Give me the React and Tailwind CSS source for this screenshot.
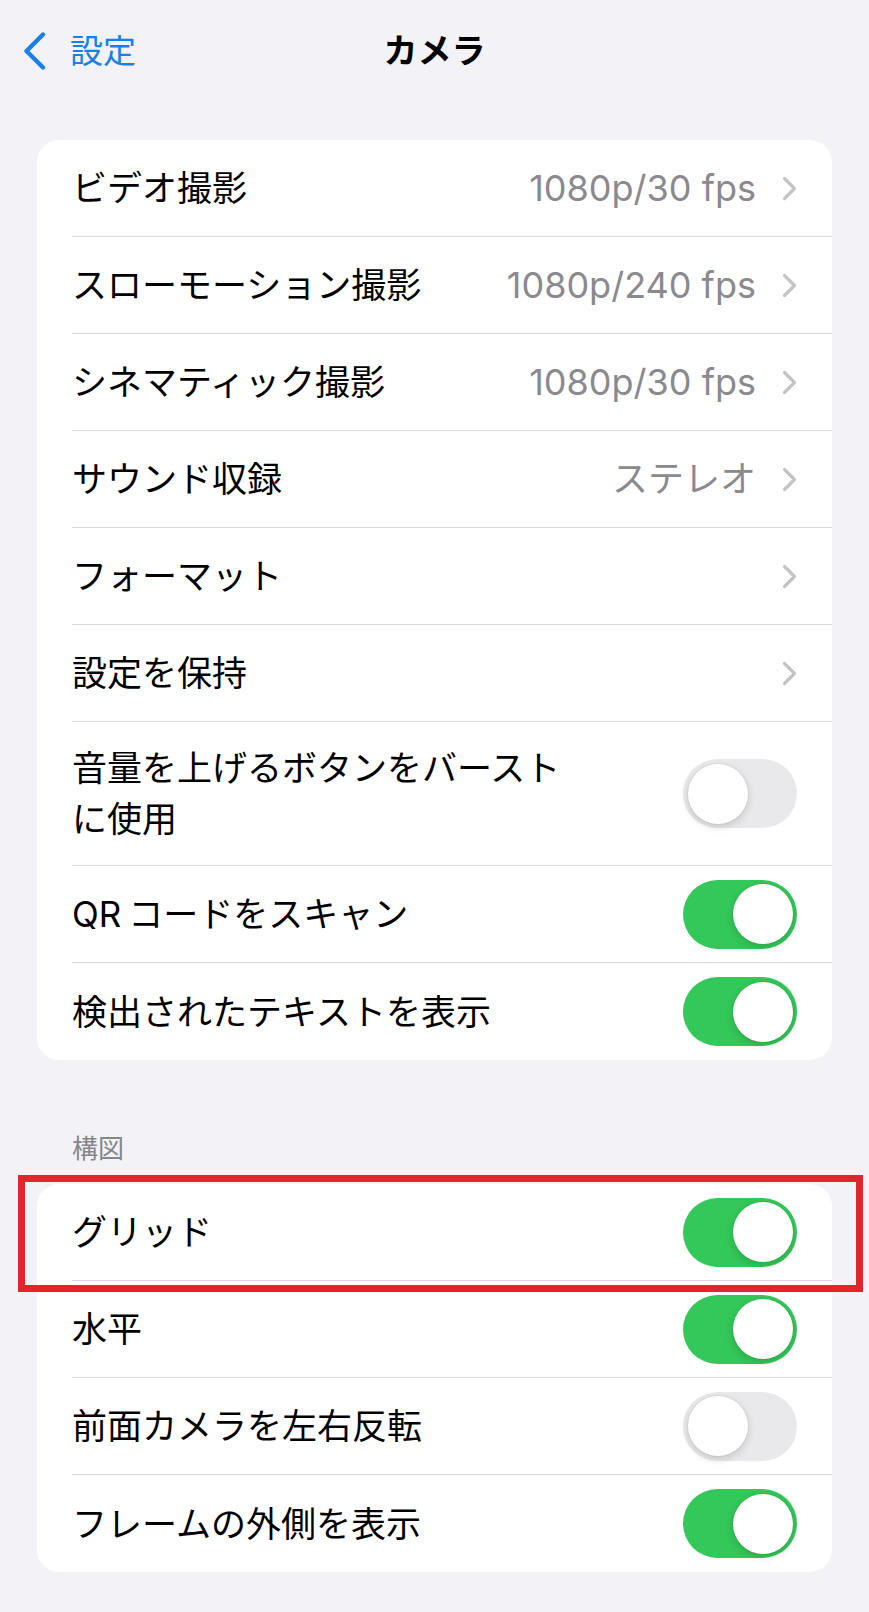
import React from "react";

const FONT = { fontFamily: 'Inter, "Noto Sans CJK JP", sans-serif' };

const GROUP_ONE = [
  { label: "ビデオ撮影", value: "1080p/30 fps", type: "link" },
  { label: "スローモーション撮影", value: "1080p/240 fps", type: "link" },
  { label: "シネマティック撮影", value: "1080p/30 fps", type: "link" },
  { label: "サウンド収録", value: "ステレオ", type: "link" },
  { label: "フォーマット", type: "link" },
  { label: "設定を保持", type: "link" },
  { label: ["音量を上げるボタンをバースト", "に使用"], type: "toggle", on: false },
  { label: "QRコードをスキャン", qr: true, type: "toggle", on: true },
  { label: "検出されたテキストを表示", type: "toggle", on: true, last: true },
];

const GROUP_TWO = [
  { label: "グリッド", type: "toggle", on: true, marked: true },
  { label: "水平", type: "toggle", on: true },
  { label: "前面カメラを左右反転", type: "toggle", on: false },
  { label: "フレームの外側を表示", type: "toggle", on: true, last: true },
];

function Chevron() {
  return (
    <svg width="15" height="25" viewBox="0 0 15 25" fill="none" className="shrink-0">
      <path d="M2.5 2.5 L12.5 12.5 L2.5 22.5" stroke="#c4c4c7" strokeWidth="3.2" strokeLinecap="round" strokeLinejoin="round" />
    </svg>
  );
}

function Toggle({ on }) {
  return (
    <div
      className={`relative w-[114px] h-[69px] rounded-full shrink-0 ${
        on ? "bg-[#34c759]" : "bg-[#e9e9eb]"
      }`}
    >
      <div
        className={`absolute top-[4.5px] w-[60px] h-[60px] rounded-full bg-white shadow-[0_3px_8px_rgba(0,0,0,0.15),0_0_0_1px_rgba(0,0,0,0.04)] ${
          on ? "left-[49.5px]" : "left-[4.5px]"
        }`}
      />
    </div>
  );
}

function Label({ item }) {
  if (Array.isArray(item.label)) {
    return (
      <>
        {item.label[0]}
        <br />
        {item.label[1]}
      </>
    );
  }
  if (item.qr) {
    return (
      <>
        <span className="mr-[7px]">QR</span>コードをスキャン
      </>
    );
  }
  return item.label;
}

function Row({ item }) {
  const twoLine = Array.isArray(item.label);
  return (
    <div className={`relative flex pl-[35px] ${twoLine ? "h-[144px]" : "h-[97px]"}`}>
      {item.marked && (
        <div className="absolute left-[-19px] right-[-31px] top-[-9px] bottom-[-11px] border-[7px] border-[#e3242b] pointer-events-none" />
      )}
      <div
        className={`flex flex-1 items-center justify-between pr-[35px] ${
          item.last ? "" : "border-b border-[#d9d9dd]"
        }`}
      >
        <div className={`text-[35px] text-black ${twoLine ? "leading-[51px]" : "leading-[44px]"}`}>
          <Label item={item} />
        </div>
        {item.type === "link" ? (
          <div className="flex items-center gap-[26px]">
            {item.value && <span className="text-[36px] leading-[44px] text-[#8a8a8e]">{item.value}</span>}
            <Chevron />
          </div>
        ) : (
          <Toggle on={item.on} />
        )}
      </div>
    </div>
  );
}

export default function App() {
  return (
    <div style={FONT} className="min-h-[1612px] w-[869px] bg-[#f2f2f7]">
      <header className="grid grid-cols-3 items-center h-[102px]">
        <div className="flex items-center gap-[24px] pl-[23px]">
          <svg width="23" height="38" viewBox="0 0 23 38" fill="none">
            <path d="M20 2.5 L3.5 19 L20 35.5" stroke="#1a7fe8" strokeWidth="4.4" strokeLinecap="round" strokeLinejoin="round" />
          </svg>
          <span className="text-[33px] leading-[40px] text-[#1a7fe8]">設定</span>
        </div>
        <h1 className="text-center text-[34px] leading-[40px] font-bold text-black">カメラ</h1>
        <div />
      </header>

      <section className="mx-[37px] mt-[38px] rounded-[22px] bg-white">
        {GROUP_ONE.map((item, i) => (
          <Row key={i} item={item} />
        ))}
      </section>

      <div className="px-[72px] pt-[72px] pb-[18px] text-[26px] leading-[34px] text-[#86868b]">構図</div>

      <section className="mx-[37px] rounded-[22px] bg-white">
        {GROUP_TWO.map((item, i) => (
          <Row key={i} item={item} />
        ))}
      </section>
    </div>
  );
}
